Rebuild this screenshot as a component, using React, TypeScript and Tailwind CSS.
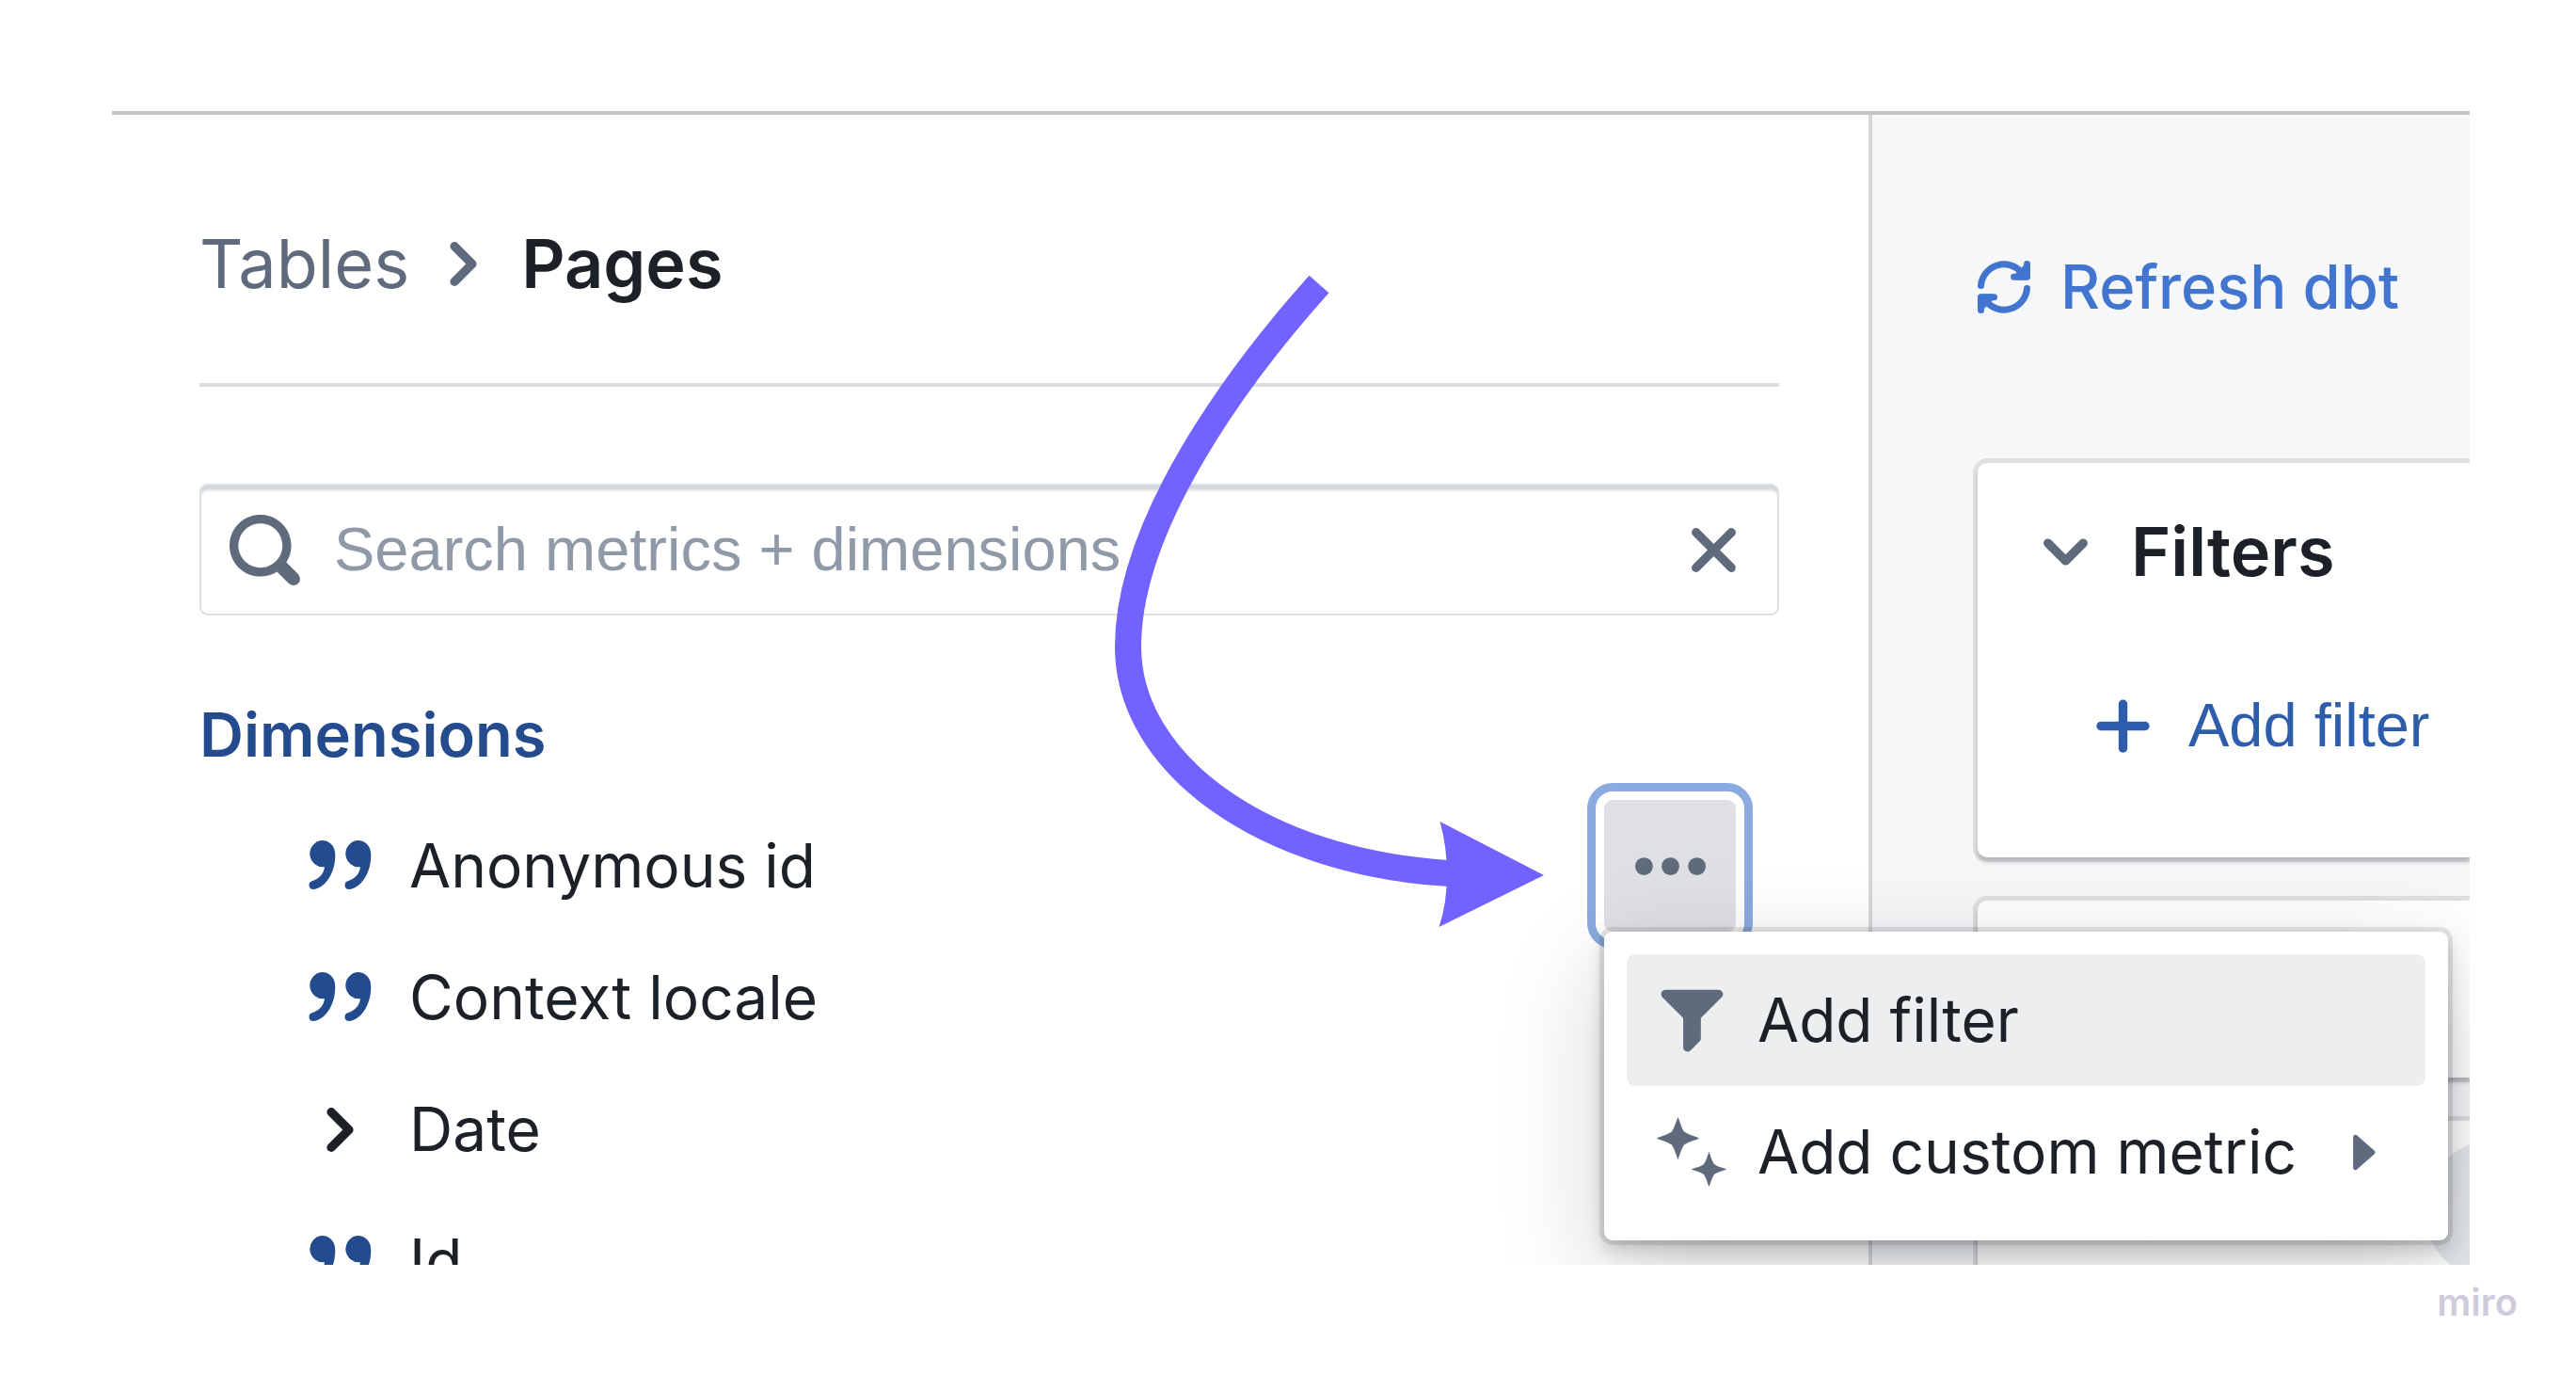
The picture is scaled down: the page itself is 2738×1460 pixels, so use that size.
import type { ReactNode } from "react";

const CHEVRON_RIGHT =
  "M10.71 7.29l-4-4a1.003 1.003 0 00-1.42 1.42L8.59 8 5.3 11.29c-.19.18-.3.43-.3.71a1.003 1.003 0 001.71.71l4-4c.18-.18.29-.43.29-.71 0-.28-.11-.53-.29-.71z";
const CHEVRON_DOWN =
  "M12 5c-.28 0-.53.11-.71.29L8 8.59l-3.29-3.3a1.003 1.003 0 00-1.42 1.42l4 4c.18.18.43.29.71.29s.53-.11.71-.29l4-4A1.003 1.003 0 0012 5z";
const SEARCH =
  "M15.55 13.43l-2.67-2.68a6.94 6.94 0 001.11-3.76c0-3.87-3.13-7-7-7s-7 3.13-7 7 3.13 7 7 7c1.39 0 2.68-.42 3.76-1.11l2.68 2.67a1.498 1.498 0 102.12-2.12zm-8.56-1.44c-2.76 0-5-2.24-5-5s2.24-5 5-5 5 2.24 5 5-2.24 5-5 5z";
const CROSS =
  "M9.41 8l3.29-3.29c.19-.18.3-.43.3-.71a1.003 1.003 0 00-1.71-.71L8 6.59l-3.29-3.3a1.003 1.003 0 00-1.42 1.42L6.59 8 3.3 11.29c-.19.18-.3.43-.3.71a1.003 1.003 0 001.71.71L8 9.41l3.29 3.29c.18.19.43.3.71.3a1.003 1.003 0 00.71-1.71L9.41 8z";
const FUNNEL =
  "M13.99.99h-12a1.003 1.003 0 00-.71 1.71l4.71 4.71V14a1.003 1.003 0 001.71.71l2-2c.18-.18.29-.43.29-.71V7.41L14.7 2.7a1.003 1.003 0 00-.71-1.71z";
const PLUS =
  "M13 7H9V3c0-.55-.45-1-1-1s-1 .45-1 1v4H3c-.55 0-1 .45-1 1s.45 1 1 1h4v4c0 .55.45 1 1 1s1-.45 1-1V9h4c.55 0 1-.45 1-1s-.45-1-1-1z";
const CARET_RIGHT =
  "M11 8c0-.15-.07-.28-.17-.37l-4-3.5A.495.495 0 006 4.5v7a.495.495 0 00.83.37l4-3.5c.1-.09.17-.22.17-.37z";

function Icon({ d, className = "" }: { d: string; className?: string }) {
  return (
    <svg viewBox="0 0 16 16" aria-hidden="true" className={`size-[75px] shrink-0 fill-current ${className}`}>
      <path d={d} />
    </svg>
  );
}

function QuoteIcon() {
  const mark =
    "M14 0C22.500 0 28.300 6 28.300 15.500C28.300 36 17 51 5 52C2 52 .5 50 .5 47.500C.5 45.500 1.500 44 3.500 43.300C11 40.500 16 36 17 28.200A14 14 0 1 1 14 0z";
  return (
    <svg viewBox="0 0 75 75" aria-hidden="true" className="size-[75px] shrink-0 fill-[#234b8d]">
      <path d={mark} transform="translate(4 10)" />
      <path d={mark} transform="translate(42 10)" />
    </svg>
  );
}

function RefreshIcon() {
  const half = (
    <>
      <path d="M3.500 26.500A24.500 24.500 0 0 1 47 13" fill="none" />
      <path d="M52.500 3.500V17.300H38.500" fill="none" />
      <path d="M42 17L52 7V17z" />
    </>
  );
  return (
    <svg
      viewBox="0 0 56 56"
      aria-hidden="true"
      strokeWidth={7}
      strokeLinecap="round"
      strokeLinejoin="round"
      className="size-14 shrink-0 fill-current stroke-current"
    >
      {half}
      <g transform="rotate(180 28 28)">{half}</g>
    </svg>
  );
}

function SparklesIcon() {
  return (
    <svg viewBox="0 0 75 75" aria-hidden="true" className="size-[75px] shrink-0 fill-current">
      <path d="M22.500 0C24 3 25.500 10 29 15.500C35 19.500 42 20.500 45 22.500C42 24.500 35 25.500 29 29.500C25.500 35 24 42 22.500 45C21 42 19.500 35 16 29.500C10 25.500 3 24.500 0 22.500C3 20.500 10 19.500 16 15.500C19.500 10 21 3 22.500 0z" />
      <path d="M55.500 37C57 40 58 45.500 61 50C66 53.500 72 54 74 55.500C72 57 66 57.500 61 61C58 65.500 57 71 55.500 74C54 71 53 65.500 50 61C45 57.500 39 57 37 55.500C39 54 45 53.500 50 50C53 45.500 54 40 55.500 37z" />
    </svg>
  );
}

function PointerArrow() {
  return (
    <svg
      viewBox="0 0 480 720"
      aria-hidden="true"
      className="pointer-events-none absolute right-[195px] -bottom-[10px] h-[720px] w-[480px]"
    >
      <path d="M232 22C145 119 29 277 29 407C29 532 173 636 370 648" fill="none" stroke="#7262ff" strokeWidth="28" />
      <path d="M360.500 593L471 650L359.500 705Q368 680 368 649Q368 620 360.500 593z" fill="#7262ff" />
    </svg>
  );
}

function MenuItem({ icon, label, active, submenu }: { icon: ReactNode; label: string; active?: boolean; submenu?: boolean }) {
  return (
    <button
      type="button"
      role="menuitem"
      className={`flex h-[140px] w-full items-center gap-8 rounded-[9px] pr-9 pl-8 text-left text-[#5f6b7c] ${active ? "bg-[#edeef0]" : ""}`}
    >
      {icon}
      <span className="flex-1 whitespace-nowrap text-[#1c2127]">{label}</span>
      {submenu && <Icon d={CARET_RIGHT} />}
    </button>
  );
}

function ItemActions() {
  return (
    <div className="relative mr-[46px] ml-auto">
      <button
        type="button"
        aria-label="Dimension actions"
        aria-expanded="true"
        className="flex size-[140px] items-center justify-center rounded-[9px] bg-[#dfe0e4] text-[#5f6b7c] outline-[9px] outline-offset-[9px] outline-[#8aaae0]"
      >
        <svg viewBox="0 0 16 16" aria-hidden="true" className="size-[75px] fill-current">
          <circle cx="2" cy="8" r="2" />
          <circle cx="8" cy="8" r="2" />
          <circle cx="14" cy="8" r="2" />
        </svg>
      </button>
      <div
        role="menu"
        className="absolute top-full left-0 w-[897px] rounded-[9px] bg-white p-6 shadow-[0_0_0_5px_rgba(17,20,24,0.1),0_9px_19px_rgba(17,20,24,0.2),0_37px_112px_rgba(17,20,24,0.2)]"
      >
        <MenuItem icon={<Icon d={FUNNEL} />} label="Add filter" active />
        <MenuItem icon={<SparklesIcon />} label="Add custom metric" submenu />
      </div>
      <PointerArrow />
    </div>
  );
}

const dimensions = [
  { name: "Anonymous id", expandable: false, menuOpen: true },
  { name: "Context locale", expandable: false, menuOpen: false },
  { name: "Date", expandable: true, menuOpen: false },
  { name: "Id", expandable: false, menuOpen: false },
];

const card = "bg-white rounded-l-[10px] shadow-[0_0_0_5px_rgba(17,20,24,0.1),0_5px_5px_rgba(17,20,24,0.2)]";

export default function App() {
  return (
    <div className="flex h-screen flex-col bg-white pt-[118px] font-['Inter',sans-serif] text-[64px] leading-[84px] text-[#1c2127]">
      <main className="mr-[113px] ml-[119px] flex min-h-0 flex-1 overflow-hidden border-t-4 border-[#c4c4c4]">
        <section className="relative z-10 min-w-0 flex-1 border-r-4 border-[#d5d7d8] pr-[95px] pl-[93px]">
          <nav aria-label="Breadcrumb" className="flex items-center border-b-4 border-[#dcdcdd] pt-[116px] pb-[85px] text-[72px]">
            <a href="#tables" className="text-[#5f6b7c]">
              Tables
            </a>
            <Icon d={CHEVRON_RIGHT} className="mr-6 ml-5 text-[#5f6b7c]" />
            <span aria-current="page" className="font-semibold">
              Pages
            </span>
          </nav>

          <div className="mt-[103px] flex h-[140px] items-center gap-9 rounded-[9px] px-8 text-[#5f6b7c] shadow-[inset_0_0_0_2px_#dcdfe3,inset_0_7px_3px_#d3d6da]">
            <Icon d={SEARCH} />
            <input
              type="text"
              aria-label="Search metrics and dimensions"
              placeholder="Search metrics + dimensions"
              className="min-w-0 flex-1 bg-transparent font-['Liberation_Sans',sans-serif] text-[65px] text-[#1c2127] outline-none placeholder:text-[#8f99a8]"
            />
            <button type="button" aria-label="Clear search">
              <Icon d={CROSS} />
            </button>
          </div>

          <h2 className="mt-[85px] text-[65px] font-semibold text-[#234b8d]">Dimensions</h2>
          <ul className="mt-[27px]">
            {dimensions.map((item) => (
              <li key={item.name} className="flex h-[140px] items-center pl-28">
                {item.expandable ? <Icon d={CHEVRON_RIGHT} /> : <QuoteIcon />}
                <span className="ml-9">{item.name}</span>
                {item.menuOpen && <ItemActions />}
              </li>
            ))}
          </ul>
        </section>

        <section className="w-[635px] shrink-0 bg-[#f6f7f9] pt-[141px] pl-[112px] whitespace-nowrap">
          <button type="button" className="flex items-center gap-8 text-[65px] font-medium text-[#4275cf]">
            <RefreshIcon />
            Refresh dbt
          </button>

          <div className={`mt-[145px] pt-[52px] pb-[98px] pl-14 ${card}`}>
            <button type="button" aria-expanded="true" className="flex items-center gap-8 text-[72px] font-semibold">
              <Icon d={CHEVRON_DOWN} className="text-[#5f6b7c]" />
              Filters
            </button>
            <button
              type="button"
              className="mt-[101px] ml-[61px] flex items-center gap-8 font-['Liberation_Sans',sans-serif] text-[65px] text-[#2d5dab]"
            >
              <Icon d={PLUS} />
              Add filter
            </button>
          </div>
          <div className={`mt-[46px] h-[188px] ${card}`} />
          <div className={`mt-[46px] flex h-[280px] overflow-hidden pt-5 pl-[475px] ${card}`}>
            <div className="size-[150px] shrink-0 rounded-full bg-[#e5e8ec]" />
          </div>
        </section>
      </main>

      <footer className="h-[116px] shrink-0 pt-4 pr-[62px] text-right text-[40px] leading-[48px] font-semibold text-[#cfcbdb]">
        miro
      </footer>
    </div>
  );
}
